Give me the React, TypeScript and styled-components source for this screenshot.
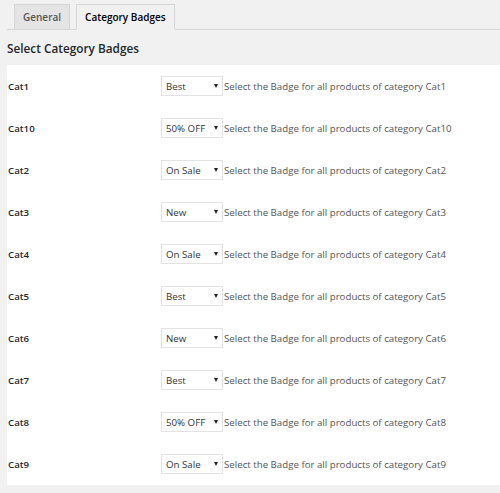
import React from "react";
import styled, { createGlobalStyle } from "styled-components";

const Global = createGlobalStyle`
  html, body { margin: 0; padding: 0; }
  body {
    background: #f1f1f1;
    font-family: "Open Sans", "Liberation Sans", sans-serif;
    color: #444;
  }
`;

const Page = styled.div`
  width: 500px;
  height: 493px;
  padding: 4px 0 0 7px;
  box-sizing: border-box;
  overflow: hidden;
`;

const TabBar = styled.div`
  display: flex;
  align-items: flex-end;
  gap: 6px;
  padding-left: 7px;
  border-bottom: 1px solid #d6d6d6;
  height: 25px;
`;

const Tab = styled.div<{ $active?: boolean }>`
  box-sizing: border-box;
  height: ${(p) => (p.$active ? 26 : 25)}px;
  margin-bottom: ${(p) => (p.$active ? -1 : 0)}px;
  padding: 0 8px;
  display: flex;
  align-items: center;
  border: 1px solid #d6d6d6;
  border-bottom: ${(p) => (p.$active ? "1px solid #f1f1f1" : "none")};
  background: ${(p) => (p.$active ? "#f1f1f1" : "#e4e4e4")};
  color: ${(p) => (p.$active ? "#000" : "#555")};
  font-size: 10px;
  font-weight: 600;
`;

const Heading = styled.h2`
  margin: 0;
  height: 35px;
  display: flex;
  align-items: center;
  font-size: 11.8px;
  font-weight: 600;
  color: #23282d;
`;

const Table = styled.div`
  background: #fff;
  display: flex;
  flex-direction: column;
`;

const Row = styled.div`
  height: 42px;
  display: grid;
  grid-template-columns: 153px auto 1fr;
  align-items: center;
  padding-left: 1px;
`;

const Label = styled.div`
  font-size: 9.7px;
  font-weight: 600;
  color: #23282d;
`;

const SelectBox = styled.div`
  box-sizing: border-box;
  width: 62px;
  height: 20px;
  border: 1px solid #e2e2e2;
  background: #fff;
  display: flex;
  align-items: center;
  justify-content: space-between;
  padding: 0 4px 0 4px;
  font-size: 9.7px;
  color: #333;
  margin-right: 1px;
`;

const Arrow = styled.span`
  width: 0;
  height: 0;
  border-left: 2.5px solid transparent;
  border-right: 2.5px solid transparent;
  border-top: 4px solid #222;
`;

const Desc = styled.div`
  font-size: 9.7px;
  color: #555;
  white-space: nowrap;
`;

const rows: [string, string][] = [
  ["Cat1", "Best"],
  ["Cat10", "50% OFF"],
  ["Cat2", "On Sale"],
  ["Cat3", "New"],
  ["Cat4", "On Sale"],
  ["Cat5", "Best"],
  ["Cat6", "New"],
  ["Cat7", "Best"],
  ["Cat8", "50% OFF"],
  ["Cat9", "On Sale"],
];

export default function App() {
  return (
    <Page>
      <Global />
      <TabBar>
        <Tab>General</Tab>
        <Tab $active>Category Badges</Tab>
      </TabBar>
      <Heading>Select Category Badges</Heading>
      <Table>
        {rows.map(([cat, badge]) => (
          <Row key={cat}>
            <Label>{cat}</Label>
            <SelectBox>
              <span>{badge}</span>
              <Arrow />
            </SelectBox>
            <Desc>Select the Badge for all products of category {cat}</Desc>
          </Row>
        ))}
      </Table>
    </Page>
  );
}
